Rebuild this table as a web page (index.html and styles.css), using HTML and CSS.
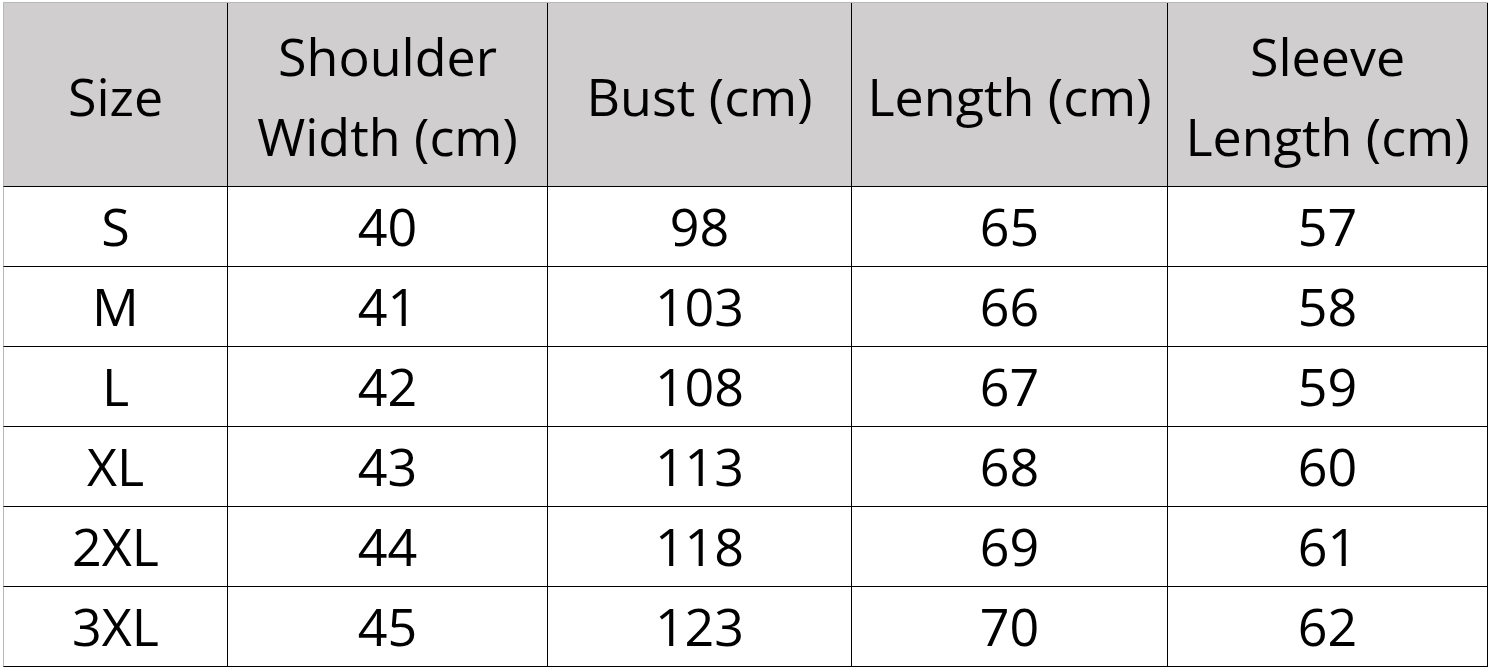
FILE: index.html
```html
<!DOCTYPE html>
<html>
<head>
<meta charset="utf-8">
<link rel="stylesheet" href="styles.css">
</head>
<body>
<div class="sheet">
  <div class="cell head">Size</div>
  <div class="cell head">Shoulder<br>Width (cm)</div>
  <div class="cell head">Bust (cm)</div>
  <div class="cell head">Length (cm)</div>
  <div class="cell head">Sleeve<br>Length (cm)</div>

  <div class="cell">S</div><div class="cell">40</div><div class="cell">98</div><div class="cell">65</div><div class="cell">57</div>
  <div class="cell">M</div><div class="cell">41</div><div class="cell">103</div><div class="cell">66</div><div class="cell">58</div>
  <div class="cell">L</div><div class="cell">42</div><div class="cell">108</div><div class="cell">67</div><div class="cell">59</div>
  <div class="cell">XL</div><div class="cell">43</div><div class="cell">113</div><div class="cell">68</div><div class="cell">60</div>
  <div class="cell">2XL</div><div class="cell">44</div><div class="cell">118</div><div class="cell">69</div><div class="cell">61</div>
  <div class="cell">3XL</div><div class="cell">45</div><div class="cell">123</div><div class="cell">70</div><div class="cell">62</div>
</div>
</body>
</html>
```
FILE: styles.css
```css
html, body {
  margin: 0;
  padding: 0;
  background: #ffffff;
}
.sheet {
  margin: 2px 0 0 3px;
  display: grid;
  grid-template-columns: 225px 320px 304px 316px 320px;
  grid-template-rows: 184px repeat(6, 80px);
  border-top: 1px solid #b8b8b8;
  width: 1485px;
  font-family: "Open Sans", "Noto Sans", sans-serif;
  font-size: 52px;
  color: #000000;
}
.cell {
  box-sizing: border-box;
  border-right: 1px solid #000000;
  border-bottom: 1px solid #000000;
  display: flex;
  align-items: center;
  justify-content: center;
  text-align: center;
  line-height: 80px;
  padding-bottom: 2px;
}
.cell:nth-child(5n+1) {
  border-left: 1px solid #b8b8b8;
}
.head {
  background: #d0cece;
  padding-top: 2px;
  padding-bottom: 0;
}
```
